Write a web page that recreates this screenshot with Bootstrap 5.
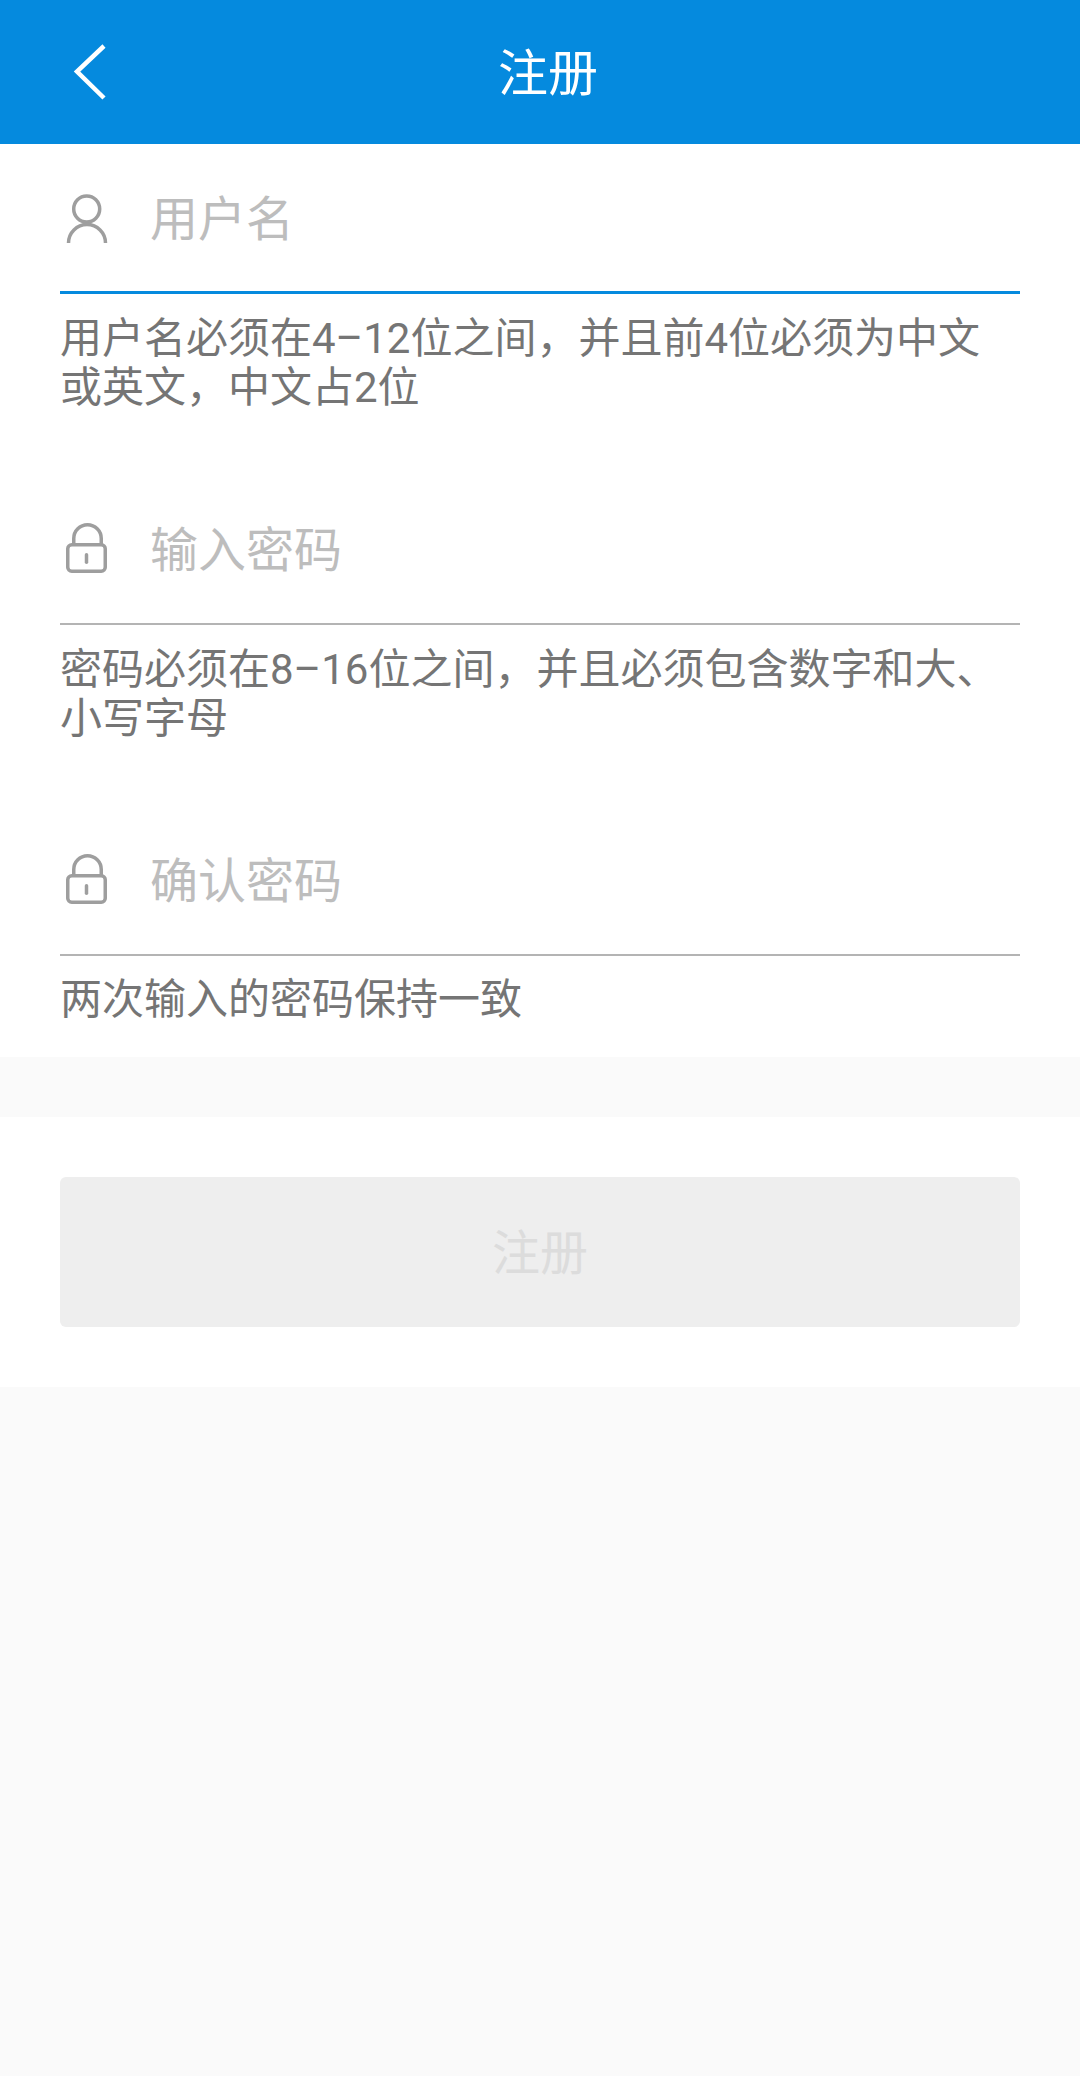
<!DOCTYPE html>
<html lang="zh-CN">
<head>
    <meta charset="UTF-8">
    <meta name="viewport" content="width=device-width, initial-scale=1.0">
    <title>注册</title>
    <link href="https://cdn.jsdelivr.net/npm/bootstrap@5.3.0/dist/css/bootstrap.min.css" rel="stylesheet">
    <style>
        body {
            background-color: #fafafa;
            font-family: Roboto, "Noto Sans CJK SC", sans-serif;
        }

        .app-bar {
            height: 144px;
            padding-top: 4px;
            background-color: #058ade;
            color: #fff;
            font-size: 50px;
        }

        .back-btn {
            left: 72px;
            top: 44px;
            width: 36px;
            height: 56px;
        }

        .form-panel {
            padding: 0 60px;
            height: 913px;
        }

        .field-row {
            height: 150px;
            border-bottom: 2px solid #b4b4b4;
            padding-top: 4px;
        }

        .field-row.is-focus {
            border-bottom: 3px solid #058ade;
        }

        .field-icon {
            width: 60px;
            height: 60px;
            margin-right: 30px;
            flex-shrink: 0;
        }

        .field-text {
            font-size: 48px;
            color: #bdbdbd;
        }

        .field-hint {
            font-size: 42px;
            line-height: 49px;
            color: #757575;
            padding-top: 20px;
            height: 181px;
        }

        .field-hint.is-last {
            height: auto;
            padding-top: 19px;
        }

        .submit-panel {
            margin-top: 60px;
            height: 270px;
            padding: 60px;
        }

        .submit-btn {
            height: 150px;
            padding-top: 5px;
            border: 0;
            border-radius: 6px;
            background-color: #eeeeee;
            color: #dcdcdc;
            font-size: 48px;
        }
    </style>
</head>
<body>
    <!-- Header -->
    <div class="app-bar position-relative d-flex align-items-center justify-content-center">
        <svg class="back-btn position-absolute" viewBox="0 0 36 56" fill="none" stroke="#fff" stroke-width="4.5">
            <polyline points="32,2 5,27.5 32,54" stroke-linejoin="miter"/>
        </svg>
        <span class="ms-3">注册</span>
    </div>

    <!-- Form -->
    <div class="form-panel bg-white">
        <div class="field-row is-focus d-flex align-items-center">
            <svg class="field-icon" viewBox="0 0 60 60" fill="none" stroke="#9e9e9e" stroke-width="3.5">
                <circle cx="26.7" cy="19" r="13"/>
                <path d="M8.5 53 A18.5 18.5 0 0 1 45.5 53"/>
            </svg>
            <span class="field-text">用户名</span>
        </div>
        <div class="field-hint">用户名必须在4–12位之间，并且前4位必须为中文或英文，中文占2位</div>

        <div class="field-row d-flex align-items-center">
            <svg class="field-icon" viewBox="0 0 60 60" fill="none" stroke="#9e9e9e" stroke-width="3.5">
                <rect x="7.75" y="23.75" width="37.5" height="26.5" rx="4"/>
                <path d="M13.75 23.75 V17.5 A13.75 13.75 0 0 1 41.25 17.5 V23.75"/>
                <path d="M26.5 33.75 V41.25" stroke-linecap="round"/>
            </svg>
            <span class="field-text">输入密码</span>
        </div>
        <div class="field-hint">密码必须在8–16位之间，并且必须包含数字和大、小写字母</div>

        <div class="field-row d-flex align-items-center">
            <svg class="field-icon" viewBox="0 0 60 60" fill="none" stroke="#9e9e9e" stroke-width="3.5">
                <rect x="7.75" y="23.75" width="37.5" height="26.5" rx="4"/>
                <path d="M13.75 23.75 V17.5 A13.75 13.75 0 0 1 41.25 17.5 V23.75"/>
                <path d="M26.5 33.75 V41.25" stroke-linecap="round"/>
            </svg>
            <span class="field-text">确认密码</span>
        </div>
        <div class="field-hint is-last">两次输入的密码保持一致</div>
    </div>

    <!-- Submit -->
    <div class="submit-panel bg-white">
        <button class="submit-btn w-100" type="button" disabled>注册</button>
    </div>

    <script src="https://cdn.jsdelivr.net/npm/bootstrap@5.3.0/dist/js/bootstrap.bundle.min.js"></script>
</body>
</html>
